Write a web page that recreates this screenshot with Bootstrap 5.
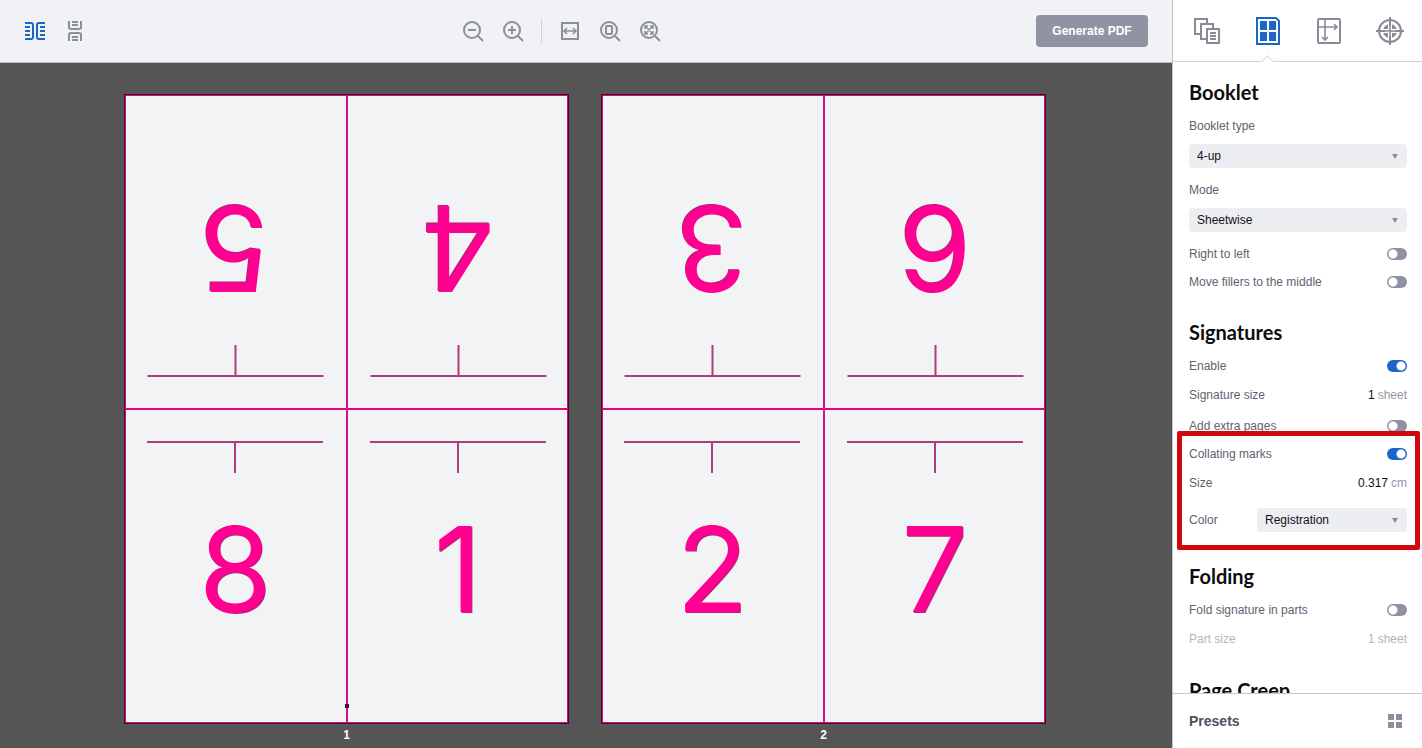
<!DOCTYPE html>
<html lang="en">
<head>
<meta charset="utf-8">
<meta name="viewport" content="width=device-width, initial-scale=1">
<title>Booklet imposition</title>
<link href="https://cdn.jsdelivr.net/npm/bootstrap@5.3.0/dist/css/bootstrap.min.css" rel="stylesheet">
<style>
  :root { --ink: #5d636f; --icon: #8c8f9b; --blue: #1b66c9; --pink: #e6007e; }
  body { font: 12px/20px "Liberation Sans", Arial, sans-serif; color: var(--ink); }
  svg { display: block; fill: none; stroke: currentColor; stroke-width: 2; }
  .topbar { height: 63px; padding: 0 24px 0 19px; background: #f1f2f6; border-bottom: 1px solid #b9bbc0; }
  .tool { width: 32px; height: 40px; color: var(--icon); }
  .tool-wide { width: 40px; }
  .tool, .panel-tab { display: flex; align-items: center; justify-content: center; padding: 0; border: 0; background: none; }
  .tool.active, .panel-tab.active { color: var(--blue); }
  .tool-divider { width: 1px; height: 24px; background: #cfd1d8; }
  .btn-generate { width: 112px; height: 32px; padding: 0; border: 0; border-radius: 4px; background: #9094a2; color: #fff; font-size: 12px; font-weight: 700; }

  .stage { background: #555; gap: 32px; padding: 31px 2px 0 0; min-height: 0; }
  .sheet-figure { display: flex; flex-direction: column; flex: 0 1 445px; }
  .sheet-figure figcaption { height: 24px; line-height: 22px; text-align: center; color: #fff; font-weight: 700; }
  .sheet { flex: 1; min-height: 0; display: grid; grid-template: 1fr 1fr / 1fr 1fr; gap: 2px;
    background: #f1f3f5; border: 1px solid #3d0c2a; box-shadow: inset 0 0 0 1px var(--pink); position: relative; }
  .sheet-cell { display: flex; flex-direction: column; align-items: center; padding-top: 31px; min-height: 0;
    font: 400 118px/118px Inter, sans-serif; color: #ff0090; text-shadow: 1px 1px 0 #b8207a; }
  .sheet-cell.flipped { transform: rotate(180deg); }
  .sheet-cell::before { content: ""; flex: none; width: 80%; height: 2px; background: #b23a80; }
  .sheet-cell::after { content: ""; order: 1; flex: none; width: 2px; height: 30px; background: #b23a80; }
  .sheet-cell span { order: 2; margin-top: 37px; }
  .fold-x, .fold-y { position: absolute; background: var(--pink); }
  .fold-x { inset: calc(50% - 1px) 0 auto 0; height: 2px; }
  .fold-y { inset: 0 auto 0 calc(50% - 1px); width: 2px; background: #d6108c; }
  .collate { position: absolute; left: calc(50% - 2px); bottom: 15px; width: 4px; height: 4px; background: #3d0c2a; }

  .panel { width: 250px; flex: none; border-left: 1px solid #c2c3c8; background: #fff; }
  .panel-tabs { flex: none; height: 62px; padding-left: 3px; border-bottom: 1px solid #d3d4d8; }
  .panel-tab { width: 61px; color: #898b95; position: relative; }
  .panel-tab.active::after { content: ""; position: absolute; bottom: -5px; left: 26px; width: 9px; height: 9px; background: #fff;
    border: solid #d3d4d8; border-width: 1px 0 0 1px; transform: rotate(45deg); }
  .panel-body { flex: 1 1 0; padding: 18px 15px 0 16px; min-height: 0; }
  .section-title { font: 700 20px/24px Lato, sans-serif; color: #0c0d10; margin: 24px 0 8px; }
  .section-title:first-child { margin-top: 0; }
  .field { margin: 12px 0 8px; }
  .field label { display: block; height: 20px; margin-bottom: 8px; }
  .picker { height: 24px; padding: 0 24px 0 8px; border: 0; border-radius: 4px; font-size: 12px; line-height: 24px; color: #101114;
    background: #edeef2 url("data:image/svg+xml,%3Csvg xmlns='http://www.w3.org/2000/svg' viewBox='0 0 6 5'%3E%3Cpath d='M0 0h6L3 5z' fill='%23888b95'/%3E%3C/svg%3E") no-repeat right 9px top 10px / 6px 5px; }
  .picker-short { width: 150px; }
  .setting { display: flex; align-items: center; justify-content: space-between; height: 28px; }
  .setting-value { height: 30px; margin-bottom: 2px; }
  .setting-value input { flex: 1; min-width: 0; padding: 0; border: 0; background: none; text-align: right; color: #101114; }
  .setting-value output { color: #9497a3; margin-left: 3px; }
  .setting-value.off, .setting-value.off input, .setting-value.off output { color: #b4b5ba; -webkit-text-fill-color: #b4b5ba; }
  .toggle.form-check-input { width: 20px; height: 12px; margin: 0; border: 0; border-radius: 6px;
    background: #8f91a5 radial-gradient(circle at 6px 6px, #fff 4px, transparent 5px); }
  .toggle.form-check-input:checked { background: var(--blue) radial-gradient(circle at 14px 6px, #fff 4px, transparent 5px); }
  .marks { position: relative; padding-bottom: 8px; }
  .highlight-box { position: absolute; inset: -9px -13px -10px -12px; border: 5px solid #d1070f; border-radius: 2px; pointer-events: none; }
  .panel-footer { flex: none; height: 55px; padding: 0 20px 0 16px; border-top: 1px solid #c6c7cb; font-size: 14px; font-weight: 700; color: #4c515c; }
</style>
</head>
<body>
<div class="d-flex vh-100 overflow-hidden">
  <main class="d-flex flex-column flex-grow-1">
    <header class="topbar d-flex align-items-center justify-content-between">
      <div class="d-flex gap-2">
        <button class="tool active" type="button" aria-label="Spreads side by side">
          <svg width="22" height="20" viewBox="0 0 22 20"><path d="M1 2H7Q9 2 9 4V16Q9 18 7 18H1M1 6H6M1 10H6M1 14H6M21 2H15Q13 2 13 4V16Q13 18 15 18H21M21 6H16M21 10H16M21 14H16"/></svg>
        </button>
        <button class="tool" type="button" aria-label="Spreads stacked">
          <svg width="16" height="22" viewBox="0 0 16 22"><path d="M2 1V7Q2 9 4 9H12Q14 9 14 7V1M5 2H11M5 5H11M2 21V15Q2 13 4 13H12Q14 13 14 15V21M5 17H11M5 20H11"/></svg>
        </button>
      </div>
      <div class="d-flex align-items-center me-1">
        <button class="tool tool-wide" type="button" aria-label="Zoom out">
          <svg width="22" height="22" viewBox="0 0 22 22"><circle cx="10" cy="10" r="8"/><path d="M16 16L21 21M6 10H14"/></svg>
        </button>
        <button class="tool tool-wide" type="button" aria-label="Zoom in">
          <svg width="22" height="22" viewBox="0 0 22 22"><circle cx="10" cy="10" r="8"/><path d="M16 16L21 21M6 10H14M10 6V14"/></svg>
        </button>
        <div class="tool-divider mx-2"></div>
        <button class="tool tool-wide" type="button" aria-label="Fit width">
          <svg width="20" height="20" viewBox="0 0 20 20"><path d="M2 2H18V18H2z"/><path stroke-width="1.6" d="M4 10H16M7 7L4 10L7 13M13 7L16 10L13 13"/></svg>
        </button>
        <button class="tool tool-wide" type="button" aria-label="Fit page">
          <svg width="22" height="22" viewBox="0 0 22 22"><circle cx="10" cy="10" r="8"/><path d="M16 16L21 21"/><rect x="7" y="6" width="6" height="8" rx="1"/></svg>
        </button>
        <button class="tool tool-wide" type="button" aria-label="Fit all">
          <svg width="22" height="22" viewBox="0 0 22 22"><circle cx="10" cy="10" r="8"/><path d="M16 16L21 21"/><path stroke-width="1.5" d="M6 6L14 14M14 6L6 14M6 9V6H9M11 6H14V9M14 11V14H11M9 14H6V11"/></svg>
        </button>
      </div>
      <button class="btn btn-generate" type="button">Generate PDF</button>
    </header>

    <section class="stage d-flex justify-content-center flex-grow-1">
      <figure class="sheet-figure m-0">
        <div class="sheet">
          <div class="sheet-cell flipped"><span>5</span></div>
          <div class="sheet-cell flipped"><span>4</span></div>
          <div class="sheet-cell"><span>8</span></div>
          <div class="sheet-cell"><span>1</span></div>
          <i class="fold-x"></i><i class="fold-y"></i><i class="collate"></i>
        </div>
        <figcaption>1</figcaption>
      </figure>
      <figure class="sheet-figure m-0">
        <div class="sheet">
          <div class="sheet-cell flipped"><span>3</span></div>
          <div class="sheet-cell flipped"><span>6</span></div>
          <div class="sheet-cell"><span>2</span></div>
          <div class="sheet-cell"><span>7</span></div>
          <i class="fold-x"></i><i class="fold-y"></i>
        </div>
        <figcaption>2</figcaption>
      </figure>
    </section>
  </main>

  <aside class="panel d-flex flex-column">
    <nav class="panel-tabs d-flex">
      <button class="panel-tab" type="button" aria-label="Pages">
        <svg width="28" height="28" viewBox="0 0 28 28"><path d="M7 17H2V2H14V6M13 22H8V7H20V11M14 12H26V26H14zM17 16H23M17 19H23M17 22H23"/></svg>
      </button>
      <button class="panel-tab active" type="button" aria-label="Layout">
        <svg width="26" height="28" viewBox="0 0 26 28"><path d="M2 1H21L24 4V27H2z"/><path fill="currentColor" stroke="none" d="M5 4H12V13H5zM14 4H21V13H14zM5 15H12V24H5zM14 15H21V24H14z"/></svg>
      </button>
      <button class="panel-tab" type="button" aria-label="Margins">
        <svg width="26" height="28" viewBox="0 0 26 28"><rect x="2" y="2" width="22" height="24" rx="1"/><path stroke-width="1.6" d="M9 2V22M2 10H20M6 20L9 23L12 20M18 7L21 10L18 13"/></svg>
      </button>
      <button class="panel-tab" type="button" aria-label="Marks">
        <svg width="28" height="28" viewBox="0 0 28 28"><circle cx="14" cy="14" r="11"/><circle cx="14" cy="14" r="7" fill="currentColor" stroke="none"/><path stroke="#fff" stroke-width="4" d="M14 5V23M5 14H23"/><path d="M14 0V9M14 19V28M0 14H9M19 14H28"/><path stroke-width="1.5" d="M14 9V19M9 14H19"/></svg>
      </button>
    </nav>

    <form class="panel-body overflow-hidden">
      <h2 class="section-title">Booklet</h2>
      <div class="field"><label for="type">Booklet type</label>
        <select id="type" class="form-select picker"><option>4-up</option></select></div>
      <div class="field"><label for="mode">Mode</label>
        <select id="mode" class="form-select picker"><option>Sheetwise</option></select></div>
      <div class="setting"><label for="rtl">Right to left</label><input id="rtl" class="form-check-input toggle" type="checkbox"></div>
      <div class="setting"><label for="fillers">Move fillers to the middle</label><input id="fillers" class="form-check-input toggle" type="checkbox"></div>

      <h2 class="section-title">Signatures</h2>
      <div class="setting"><label for="enable">Enable</label><input id="enable" class="form-check-input toggle" type="checkbox" checked></div>
      <div class="setting setting-value"><label for="sig">Signature size</label><input id="sig" type="text" value="1"><output>sheet</output></div>
      <div class="setting"><label for="extra">Add extra pages</label><input id="extra" class="form-check-input toggle" type="checkbox"></div>
      <div class="marks">
        <div class="setting"><label for="marks">Collating marks</label><input id="marks" class="form-check-input toggle" type="checkbox" checked></div>
        <div class="setting setting-value"><label for="size">Size</label><input id="size" type="text" value="0.317"><output>cm</output></div>
        <div class="d-flex align-items-center justify-content-between pt-2"><label for="color">Color</label>
          <select id="color" class="form-select picker picker-short"><option>Registration</option></select></div>
        <div class="highlight-box"></div>
      </div>

      <h2 class="section-title">Folding</h2>
      <div class="setting"><label for="fold">Fold signature in parts</label><input id="fold" class="form-check-input toggle" type="checkbox"></div>
      <div class="setting setting-value off"><label for="part">Part size</label><input id="part" type="text" value="1" disabled><output>sheet</output></div>

      <h2 class="section-title">Page Creep</h2>
    </form>

    <footer class="panel-footer d-flex align-items-center justify-content-between">
      <span>Presets</span>
      <button class="tool w-auto" type="button" aria-label="Preset grid">
        <svg width="14" height="14" viewBox="0 0 14 14"><path fill="currentColor" stroke="none" d="M0 0H6V6H0zM8 0H14V6H8zM0 8H6V14H0zM8 8H14V14H8z"/></svg>
      </button>
    </footer>
  </aside>
</div>
<script src="https://cdn.jsdelivr.net/npm/bootstrap@5.3.0/dist/js/bootstrap.bundle.min.js"></script>
</body>
</html>
